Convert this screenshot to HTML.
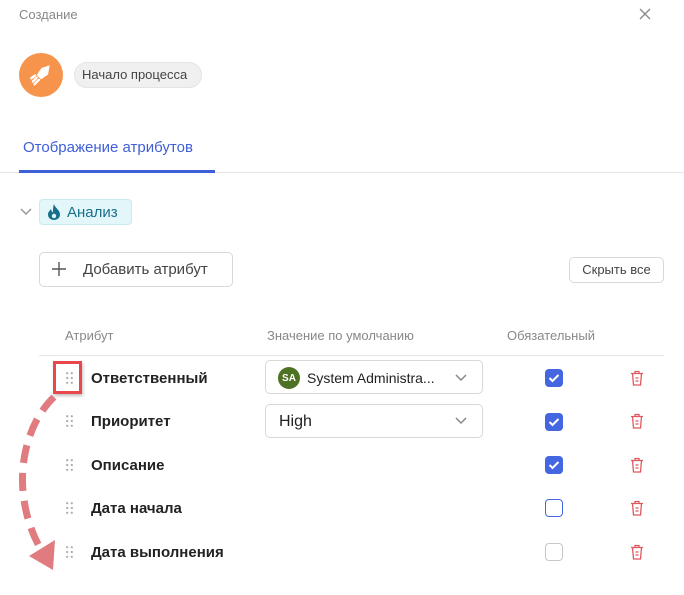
<!DOCTYPE html>
<html><head><meta charset="utf-8"><style>
*{margin:0;padding:0;box-sizing:border-box}
body{width:684px;height:595px;background:#fff;font-family:"Liberation Sans",sans-serif;position:relative;overflow:hidden;color:#1f1f1f}
.a{position:absolute}
.t{position:absolute;white-space:nowrap}
.lbl{font-size:15px;font-weight:bold;color:#222;left:91px}
.drag{position:absolute;left:66px;width:7px;height:12px}
.cb{position:absolute;left:545px;width:18px;height:18px;border-radius:4px}
.on{background:#4466e0}
.trash{position:absolute;left:629px}
.sel{position:absolute;left:265px;width:218px;height:34px;border:1px solid #d8d8d8;border-radius:5px}
</style></head><body>
<div class="t" style="left:19px;top:7px;font-size:13px;color:#888">Создание</div>
<svg class="a" style="left:639px;top:8px" width="12" height="12"><path d="M1 1L11 11M11 1L1 11" stroke="#888" stroke-width="1.3"/></svg>
<div class="a" style="left:19px;top:53px;width:44px;height:44px;border-radius:50%;background:#f7944c"></div>
<svg class="a" style="left:28px;top:62px" width="26" height="26" viewBox="0 0 24 24"><path d="M20 3L12.5 5.5L8 12L12 16L18.5 11.5Z" fill="#fff"/><path d="M8 14.5L4.5 18M10 16.5L6 20.5M6.5 12.5L3 15" stroke="#fff" stroke-width="2.2" stroke-linecap="round"/></svg>
<div class="t" style="left:74px;top:62px;height:26px;width:128px;border-radius:13px;background:#f0f0f0;border:1px solid #e4e4e4;font-size:13px;color:#444;line-height:24px;padding-left:7px">Начало процесса</div>
<div class="t" style="left:23px;top:139px;font-size:15px;color:#3f5fd6">Отображение атрибутов</div>
<div class="a" style="left:0;top:172px;width:684px;height:1px;background:#e6e6e6"></div>
<div class="a" style="left:19px;top:170px;width:196px;height:3px;background:#3f5fd6"></div>
<svg class="a" style="left:20px;top:208px" width="12" height="8"><path d="M1 1L6 6L11 1" stroke="#999" stroke-width="1.5" fill="none"/></svg>
<div class="a" style="left:39px;top:199px;width:93px;height:26px;border-radius:4px;background:#e3f6fa;border:1px solid #c9ecf3"></div>
<svg class="a" style="left:47px;top:204px" width="14" height="16" viewBox="0 0 14 16"><path d="M7 0C8 4 13 6 13 10.5C13 14 10 16 7 16C4 16 1 14 1 10.5C1 8 3 6.5 4 5C4.5 7 5 8 6 8.5C6 5 6 3 7 0Z" fill="#176f8c"/><circle cx="7" cy="12" r="2.2" fill="#e3f6fa"/></svg>
<div class="t" style="left:67px;top:204px;font-size:15px;color:#176f8c">Анализ</div>
<div class="a" style="left:39px;top:252px;width:194px;height:35px;border:1px solid #d8d8d8;border-radius:5px"></div>
<svg class="a" style="left:52px;top:262px" width="14" height="14"><path d="M7 0V14M0 7H14" stroke="#555" stroke-width="1.4"/></svg>
<div class="t" style="left:83px;top:261px;font-size:15px;color:#444">Добавить атрибут</div>
<div class="t" style="left:569px;top:257px;width:95px;height:26px;border:1px solid #d8d8d8;border-radius:5px;font-size:13px;color:#444;text-align:center;line-height:24px">Скрыть все</div>
<div class="t" style="left:65px;top:328px;font-size:13px;color:#888">Атрибут</div>
<div class="t" style="left:267px;top:328px;font-size:13px;color:#888">Значение по умолчанию</div>
<div class="t" style="left:507px;top:328px;font-size:13px;color:#888">Обязательный</div>
<div class="a" style="left:39px;top:355px;width:625px;height:1px;background:#e6e6e6"></div>

<div class="sel" style="top:360px"></div>
<div class="a" style="left:278px;top:367px;width:22px;height:22px;border-radius:50%;background:#4d7223;color:#fff;font-size:10px;font-weight:bold;text-align:center;line-height:23px">SA</div>
<div class="t" style="left:307px;top:370px;font-size:14px;color:#222">System Administra...</div>
<svg class="a" style="left:455px;top:374px" width="12" height="8"><path d="M1 1L6 6L11 1" stroke="#888" stroke-width="1.5" fill="none"/></svg>
<div class="sel" style="top:404px"></div>
<div class="t" style="left:279px;top:413px;font-size:16px;color:#222">High</div>
<svg class="a" style="left:455px;top:417px" width="12" height="8"><path d="M1 1L6 6L11 1" stroke="#888" stroke-width="1.5" fill="none"/></svg>

<div class="t lbl" style="top:370px">Ответственный</div>
<div class="t lbl" style="top:413px">Приоритет</div>
<div class="t lbl" style="top:457px">Описание</div>
<div class="t lbl" style="top:500px">Дата начала</div>
<div class="t lbl" style="top:544px">Дата выполнения</div>

<svg width="0" height="0" style="position:absolute"><defs>
<g id="d"><circle cx="1.2" cy="1.2" r="1.1" fill="#aaa"/><circle cx="5.8" cy="1.2" r="1.1" fill="#aaa"/><circle cx="1.2" cy="6" r="1.1" fill="#aaa"/><circle cx="5.8" cy="6" r="1.1" fill="#aaa"/><circle cx="1.2" cy="10.8" r="1.1" fill="#aaa"/><circle cx="5.8" cy="10.8" r="1.1" fill="#aaa"/></g>
<g id="tr" fill="none" stroke="#e0585f" stroke-width="1.3"><path d="M2 3.5H14M6 3.5V1.5H10V3.5M3.5 3.5L4.5 15H11.5L12.5 3.5M6.5 8H9.5M6.5 11H9.5"/></g>
<g id="ck"><path d="M4.5 9L7.5 12L13.5 6" stroke="#fff" stroke-width="2" fill="none"/></g>
</defs></svg>
<svg class="drag" style="top:372px"><use href="#d"/></svg>
<svg class="drag" style="top:415px"><use href="#d"/></svg>
<svg class="drag" style="top:459px"><use href="#d"/></svg>
<svg class="drag" style="top:502px"><use href="#d"/></svg>
<svg class="drag" style="top:546px"><use href="#d"/></svg>

<svg class="cb on" style="top:369px" width="18" height="18"><use href="#ck"/></svg>
<svg class="cb on" style="top:413px" width="18" height="18"><use href="#ck"/></svg>
<svg class="cb on" style="top:456px" width="18" height="18"><use href="#ck"/></svg>
<div class="cb" style="top:499px;border:1.5px solid #4466e0"></div>
<div class="cb" style="top:543px;border:1px solid #c8c8c8"></div>

<svg class="trash" style="top:370px" width="16" height="17"><use href="#tr"/></svg>
<svg class="trash" style="top:413px" width="16" height="17"><use href="#tr"/></svg>
<svg class="trash" style="top:457px" width="16" height="17"><use href="#tr"/></svg>
<svg class="trash" style="top:500px" width="16" height="17"><use href="#tr"/></svg>
<svg class="trash" style="top:544px" width="16" height="17"><use href="#tr"/></svg>

<div class="a" style="left:53px;top:361px;width:29px;height:33px;border:3px solid #e8474b;box-shadow:1px 2px 3px rgba(0,0,0,.25)"></div>
<svg class="a" style="left:0;top:380px" width="100" height="200">
<path d="M54 17C30 40 18 80 24 120C27 140 33 155 40 168" stroke="#e07b80" stroke-width="7" fill="none" stroke-dasharray="18 10"/>
<path d="M29 176L55 160L53 190Z" fill="#e07b80"/>
</svg>
</body></html>
